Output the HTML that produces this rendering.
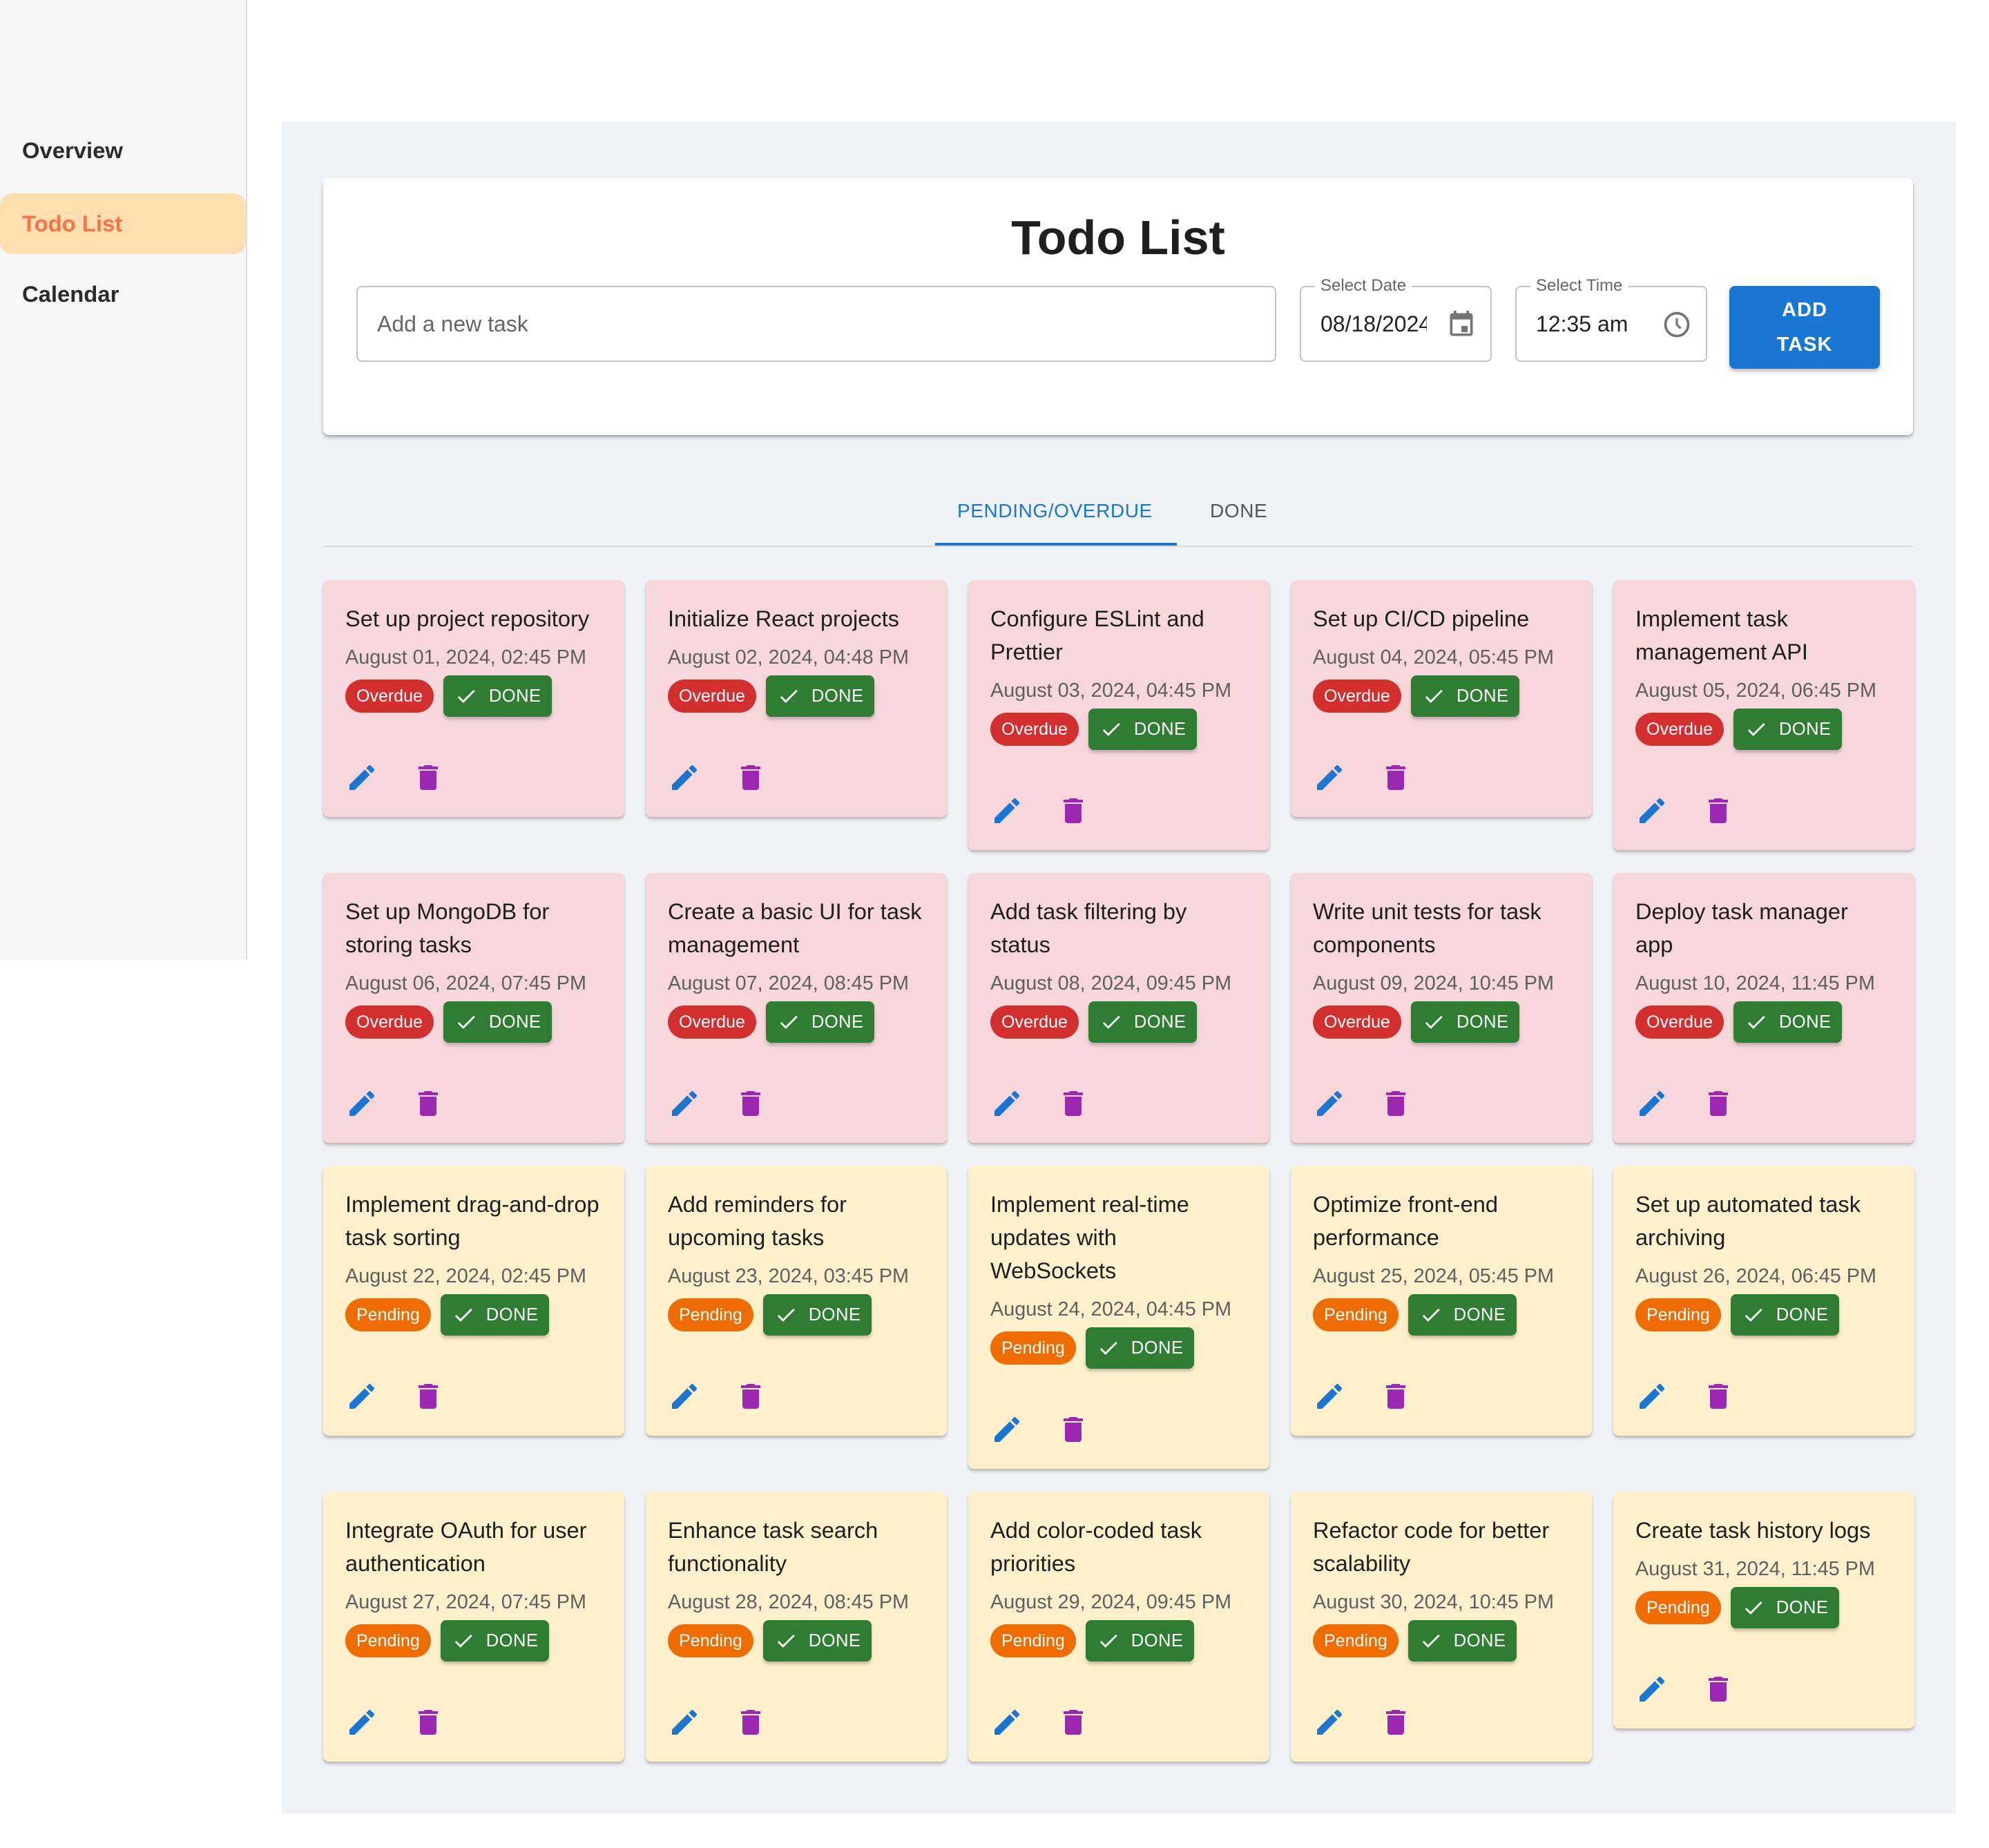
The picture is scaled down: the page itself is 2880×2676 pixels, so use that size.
<!DOCTYPE html>
<html><head><meta charset="utf-8">
<style>
html,body{margin:0;padding:0;background:#fff;}
body{width:2880px;height:2676px;overflow:hidden;font-family:"Liberation Sans",Arial,sans-serif;}
#w{zoom:2;width:1440px;height:1338px;position:relative;}
.side{position:absolute;left:0;top:0;width:178px;height:695px;background:#f6f6f6;border-right:1px solid #ddd;}
.nav{position:absolute;left:0;width:178px;height:44px;line-height:44px;padding-left:16px;box-sizing:border-box;font-weight:bold;font-size:16.4px;color:#2b2b2b;}
.nav.act{background:#fddfb0;color:#ff7043;border-radius:9px;}
.main{position:absolute;left:204px;top:88px;width:1212px;height:1225px;background:#eff2f6;}
.top{position:absolute;left:234px;top:129px;width:1151px;height:186px;background:#fff;border-radius:4px;box-shadow:0 2px 3px rgba(0,0,0,.2),0 1px 1px rgba(0,0,0,.14);}
.title{position:absolute;left:234px;width:1151px;top:150px;text-align:center;font-size:35px;font-weight:bold;color:#1f1f1f;line-height:44px;}
.fld{position:absolute;top:207px;height:55px;border:1px solid #c4c4c4;border-radius:4px;box-sizing:border-box;background:#fff;}
.lbl{position:absolute;top:-9px;left:10px;background:#fff;padding:0 4px;font-size:12px;color:#666;line-height:16px;}
.val{position:absolute;left:14px;top:0;line-height:53px;font-size:16px;color:#222;}
.btn{position:absolute;left:1252px;top:207px;width:109px;height:60px;background:#1976d2;border-radius:4px;color:#fff;font-weight:bold;font-size:14.5px;text-align:center;line-height:25px;padding-top:5px;box-sizing:border-box;letter-spacing:.5px;box-shadow:0 2px 3px rgba(0,0,0,.25);}
.tab{position:absolute;top:358px;font-size:14px;line-height:24px;letter-spacing:.3px;}
.grid{position:absolute;left:234px;top:420px;display:grid;grid-template-columns:repeat(5,218px);column-gap:15.5px;row-gap:16.5px;align-items:start;}
.c{border-radius:4px;padding:16px 16px 8.5px;box-sizing:border-box;box-shadow:0 2px 2px rgba(0,0,0,.16),0 1px 1px rgba(0,0,0,.1);}
.o{background:#f7d7da;}.p{background:#fff0cc;}
.t{font-size:16.3px;line-height:24px;color:#1e1e1e;margin-bottom:4px;}
.d{font-size:14.4px;line-height:24px;color:#5f5f5f;}
.r{display:flex;align-items:center;height:30px;margin-top:1px;}
.ch{height:24px;line-height:24px;border-radius:12px;color:#fff;font-size:12.5px;padding:0 8px;}
.ch.ov{background:#d32f2f;}.ch.pe{background:#ef6c00;}
.dn{margin-left:7px;height:30px;background:#2e7d32;border-radius:4px;color:#fff;font-size:12.8px;display:flex;align-items:center;padding:0 8px 0 8px;box-shadow:0 2px 2px rgba(0,0,0,.2);letter-spacing:.2px;}
.dn svg{margin-right:8px;}
.ic{display:flex;margin:24px 0 0 -8px;}
.ic span{width:40px;height:40px;display:flex;align-items:center;justify-content:center;margin-right:8px;}
</style></head><body><div id="w">
<div class="side">
<div class="nav" style="top:87px">Overview</div>
<div class="nav act" style="top:140px">Todo List</div>
<div class="nav" style="top:191px">Calendar</div>
</div>
<div class="main"></div>
<div class="top"></div>
<div class="title">Todo List</div>
<div class="fld" style="left:258px;width:666px"><div class="val" style="color:#666">Add a new task</div></div>
<div class="fld" style="left:941px;width:139px"><div class="lbl">Select Date</div><div class="val" style="width:77px;overflow:hidden;white-space:nowrap">08/18/2024</div>
<svg style="position:absolute;right:10px;top:16px" width="22" height="22" viewBox="0 0 24 24"><path fill="#757575" d="M19 3h-1V1h-2v2H8V1H6v2H5c-1.1 0-2 .9-2 2v14c0 1.1.9 2 2 2h14c1.1 0 2-.9 2-2V5c0-1.1-.9-2-2-2zm0 16H5V8h14v11zM12 13h5v5h-5z"/></svg></div>
<div class="fld" style="left:1097px;width:139px"><div class="lbl">Select Time</div><div class="val">12:35 am</div>
<svg style="position:absolute;right:10px;top:16px" width="22" height="22" viewBox="0 0 24 24"><circle cx="12" cy="12" r="9" fill="none" stroke="#757575" stroke-width="2"/><path d="M12 7v5l3 3" fill="none" stroke="#757575" stroke-width="1.8"/></svg></div>
<div class="btn">ADD<br>TASK</div>
<div class="tab" style="left:693px;color:#1976d2">PENDING/OVERDUE</div>
<div class="tab" style="left:876px;color:#555">DONE</div>
<div style="position:absolute;left:234px;top:395px;width:1151px;height:1px;background:#d8d8d8"></div>
<div style="position:absolute;left:677px;top:393px;width:175px;height:2px;background:#1976d2"></div>
<svg width="0" height="0" style="position:absolute"><defs>
<symbol id="ck" viewBox="0 0 24 24"><path d="M9 16.2 4.8 12l-1.4 1.4L9 19 21 7l-1.4-1.4z" fill="#fff"/></symbol>
<symbol id="ed" viewBox="0 0 24 24"><path fill="#1976d2" d="M3 17.25V21h3.75L17.81 9.94l-3.75-3.75zM20.71 7.04a1 1 0 0 0 0-1.41l-2.34-2.34a1 1 0 0 0-1.41 0l-1.83 1.83 3.75 3.75z"/></symbol>
<symbol id="tr" viewBox="0 0 24 24"><path fill="#9c27b0" d="M6 19c0 1.1.9 2 2 2h8c1.1 0 2-.9 2-2V7H6zM19 4h-3.5l-1-1h-5l-1 1H5v2h14z"/></symbol>
</defs></svg>
<div class="grid">
<div class="c o"><div class="t">Set up project repository</div><div class="d">August 01, 2024, 02:45 PM</div><div class="r"><span class="ch ov">Overdue</span><span class="dn"><svg width="17" height="17"><use href="#ck"/></svg>DONE</span></div><div class="ic"><span><svg width="24" height="24"><use href="#ed"/></svg></span><span><svg width="24" height="24"><use href="#tr"/></svg></span></div></div>
<div class="c o"><div class="t">Initialize React projects</div><div class="d">August 02, 2024, 04:48 PM</div><div class="r"><span class="ch ov">Overdue</span><span class="dn"><svg width="17" height="17"><use href="#ck"/></svg>DONE</span></div><div class="ic"><span><svg width="24" height="24"><use href="#ed"/></svg></span><span><svg width="24" height="24"><use href="#tr"/></svg></span></div></div>
<div class="c o"><div class="t">Configure ESLint and Prettier</div><div class="d">August 03, 2024, 04:45 PM</div><div class="r"><span class="ch ov">Overdue</span><span class="dn"><svg width="17" height="17"><use href="#ck"/></svg>DONE</span></div><div class="ic"><span><svg width="24" height="24"><use href="#ed"/></svg></span><span><svg width="24" height="24"><use href="#tr"/></svg></span></div></div>
<div class="c o"><div class="t">Set up CI/CD pipeline</div><div class="d">August 04, 2024, 05:45 PM</div><div class="r"><span class="ch ov">Overdue</span><span class="dn"><svg width="17" height="17"><use href="#ck"/></svg>DONE</span></div><div class="ic"><span><svg width="24" height="24"><use href="#ed"/></svg></span><span><svg width="24" height="24"><use href="#tr"/></svg></span></div></div>
<div class="c o"><div class="t">Implement task<br>management API</div><div class="d">August 05, 2024, 06:45 PM</div><div class="r"><span class="ch ov">Overdue</span><span class="dn"><svg width="17" height="17"><use href="#ck"/></svg>DONE</span></div><div class="ic"><span><svg width="24" height="24"><use href="#ed"/></svg></span><span><svg width="24" height="24"><use href="#tr"/></svg></span></div></div>

<div class="c o"><div class="t">Set up MongoDB for<br>storing tasks</div><div class="d">August 06, 2024, 07:45 PM</div><div class="r"><span class="ch ov">Overdue</span><span class="dn"><svg width="17" height="17"><use href="#ck"/></svg>DONE</span></div><div class="ic"><span><svg width="24" height="24"><use href="#ed"/></svg></span><span><svg width="24" height="24"><use href="#tr"/></svg></span></div></div>
<div class="c o"><div class="t" style="white-space:nowrap">Create a basic UI for task<br>management</div><div class="d">August 07, 2024, 08:45 PM</div><div class="r"><span class="ch ov">Overdue</span><span class="dn"><svg width="17" height="17"><use href="#ck"/></svg>DONE</span></div><div class="ic"><span><svg width="24" height="24"><use href="#ed"/></svg></span><span><svg width="24" height="24"><use href="#tr"/></svg></span></div></div>
<div class="c o"><div class="t">Add task filtering by<br>status</div><div class="d">August 08, 2024, 09:45 PM</div><div class="r"><span class="ch ov">Overdue</span><span class="dn"><svg width="17" height="17"><use href="#ck"/></svg>DONE</span></div><div class="ic"><span><svg width="24" height="24"><use href="#ed"/></svg></span><span><svg width="24" height="24"><use href="#tr"/></svg></span></div></div>
<div class="c o"><div class="t">Write unit tests for task<br>components</div><div class="d">August 09, 2024, 10:45 PM</div><div class="r"><span class="ch ov">Overdue</span><span class="dn"><svg width="17" height="17"><use href="#ck"/></svg>DONE</span></div><div class="ic"><span><svg width="24" height="24"><use href="#ed"/></svg></span><span><svg width="24" height="24"><use href="#tr"/></svg></span></div></div>
<div class="c o"><div class="t">Deploy task manager<br>app</div><div class="d">August 10, 2024, 11:45 PM</div><div class="r"><span class="ch ov">Overdue</span><span class="dn"><svg width="17" height="17"><use href="#ck"/></svg>DONE</span></div><div class="ic"><span><svg width="24" height="24"><use href="#ed"/></svg></span><span><svg width="24" height="24"><use href="#tr"/></svg></span></div></div>

<div class="c p"><div class="t" style="white-space:nowrap">Implement drag-and-drop<br>task sorting</div><div class="d">August 22, 2024, 02:45 PM</div><div class="r"><span class="ch pe">Pending</span><span class="dn"><svg width="17" height="17"><use href="#ck"/></svg>DONE</span></div><div class="ic"><span><svg width="24" height="24"><use href="#ed"/></svg></span><span><svg width="24" height="24"><use href="#tr"/></svg></span></div></div>
<div class="c p"><div class="t">Add reminders for<br>upcoming tasks</div><div class="d">August 23, 2024, 03:45 PM</div><div class="r"><span class="ch pe">Pending</span><span class="dn"><svg width="17" height="17"><use href="#ck"/></svg>DONE</span></div><div class="ic"><span><svg width="24" height="24"><use href="#ed"/></svg></span><span><svg width="24" height="24"><use href="#tr"/></svg></span></div></div>
<div class="c p"><div class="t">Implement real-time<br>updates with<br>WebSockets</div><div class="d">August 24, 2024, 04:45 PM</div><div class="r"><span class="ch pe">Pending</span><span class="dn"><svg width="17" height="17"><use href="#ck"/></svg>DONE</span></div><div class="ic"><span><svg width="24" height="24"><use href="#ed"/></svg></span><span><svg width="24" height="24"><use href="#tr"/></svg></span></div></div>
<div class="c p"><div class="t">Optimize front-end<br>performance</div><div class="d">August 25, 2024, 05:45 PM</div><div class="r"><span class="ch pe">Pending</span><span class="dn"><svg width="17" height="17"><use href="#ck"/></svg>DONE</span></div><div class="ic"><span><svg width="24" height="24"><use href="#ed"/></svg></span><span><svg width="24" height="24"><use href="#tr"/></svg></span></div></div>
<div class="c p"><div class="t">Set up automated task<br>archiving</div><div class="d">August 26, 2024, 06:45 PM</div><div class="r"><span class="ch pe">Pending</span><span class="dn"><svg width="17" height="17"><use href="#ck"/></svg>DONE</span></div><div class="ic"><span><svg width="24" height="24"><use href="#ed"/></svg></span><span><svg width="24" height="24"><use href="#tr"/></svg></span></div></div>

<div class="c p"><div class="t">Integrate OAuth for user<br>authentication</div><div class="d">August 27, 2024, 07:45 PM</div><div class="r"><span class="ch pe">Pending</span><span class="dn"><svg width="17" height="17"><use href="#ck"/></svg>DONE</span></div><div class="ic"><span><svg width="24" height="24"><use href="#ed"/></svg></span><span><svg width="24" height="24"><use href="#tr"/></svg></span></div></div>
<div class="c p"><div class="t">Enhance task search<br>functionality</div><div class="d">August 28, 2024, 08:45 PM</div><div class="r"><span class="ch pe">Pending</span><span class="dn"><svg width="17" height="17"><use href="#ck"/></svg>DONE</span></div><div class="ic"><span><svg width="24" height="24"><use href="#ed"/></svg></span><span><svg width="24" height="24"><use href="#tr"/></svg></span></div></div>
<div class="c p"><div class="t">Add color-coded task<br>priorities</div><div class="d">August 29, 2024, 09:45 PM</div><div class="r"><span class="ch pe">Pending</span><span class="dn"><svg width="17" height="17"><use href="#ck"/></svg>DONE</span></div><div class="ic"><span><svg width="24" height="24"><use href="#ed"/></svg></span><span><svg width="24" height="24"><use href="#tr"/></svg></span></div></div>
<div class="c p"><div class="t">Refactor code for better<br>scalability</div><div class="d">August 30, 2024, 10:45 PM</div><div class="r"><span class="ch pe">Pending</span><span class="dn"><svg width="17" height="17"><use href="#ck"/></svg>DONE</span></div><div class="ic"><span><svg width="24" height="24"><use href="#ed"/></svg></span><span><svg width="24" height="24"><use href="#tr"/></svg></span></div></div>
<div class="c p"><div class="t">Create task history logs</div><div class="d">August 31, 2024, 11:45 PM</div><div class="r"><span class="ch pe">Pending</span><span class="dn"><svg width="17" height="17"><use href="#ck"/></svg>DONE</span></div><div class="ic"><span><svg width="24" height="24"><use href="#ed"/></svg></span><span><svg width="24" height="24"><use href="#tr"/></svg></span></div></div>
</div>
</div></body></html>
